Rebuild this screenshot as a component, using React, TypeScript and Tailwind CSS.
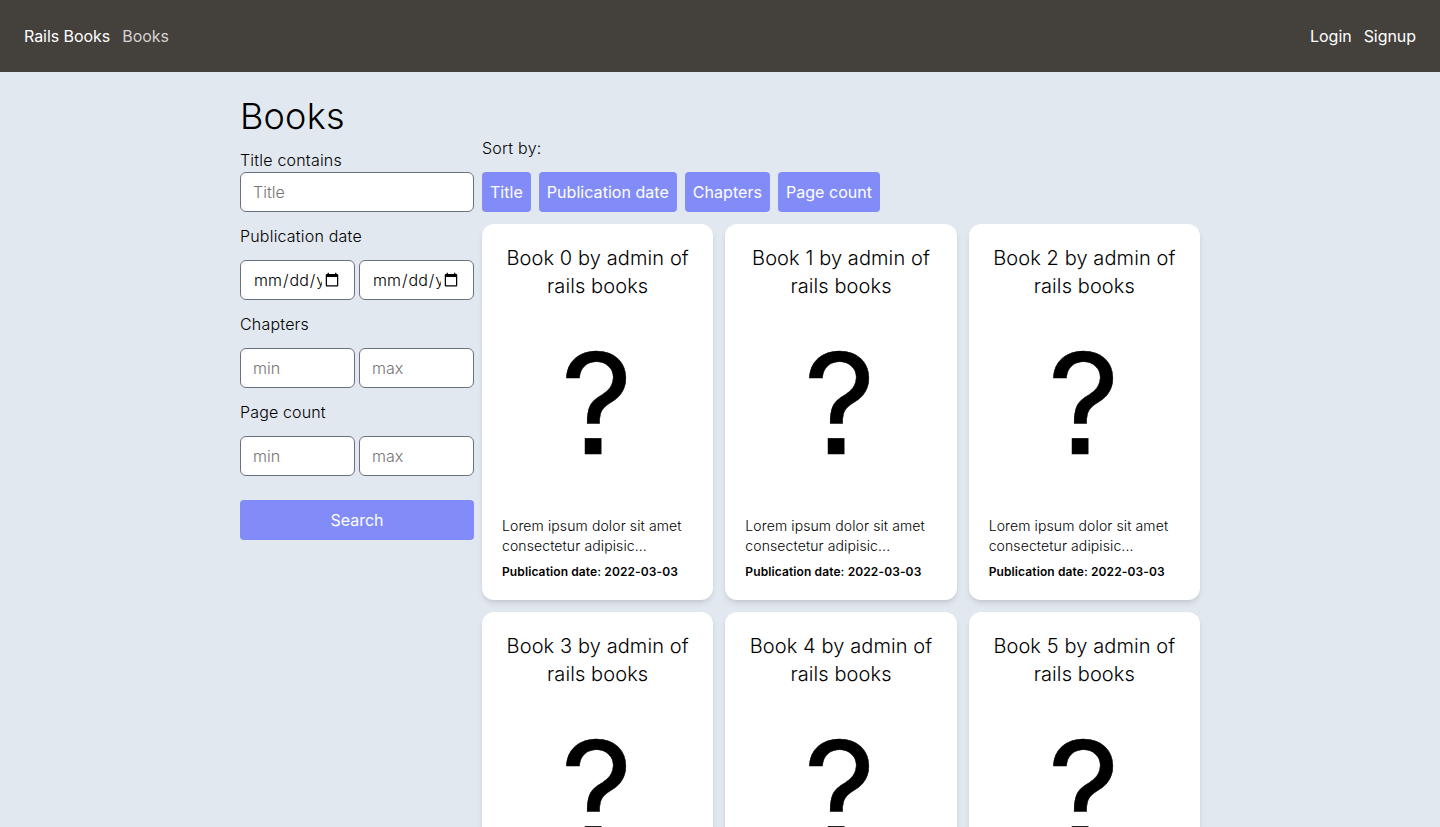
const field =
  "h-10 w-full min-w-0 rounded-md border border-gray-500 bg-white px-3 py-2 font-light placeholder:text-[#757575]";

const sortOptions = ["Title", "Publication date", "Chapters", "Page count"];

function Range() {
  return (
    <div className="grid grid-cols-2 gap-1">
      <input className={field} placeholder="min" />
      <input className={field} placeholder="max" />
    </div>
  );
}

function BookCard({ index }: { index: number }) {
  return (
    <article className="flex h-[376px] flex-col rounded-xl bg-white p-5 shadow-md">
      <h2 className="text-center text-xl tracking-[0.1px]">{`Book ${index} by admin of rails books`}</h2>
      <div className="flex h-[216px] items-center justify-center pr-0.5 pb-2">
        <span className="scale-x-[0.98] scale-y-[0.97] text-[144px] leading-none font-normal text-black [-webkit-text-stroke:0.5px_black] [font-feature-settings:'ss07']">
          ?
        </span>
      </div>
      <p className="text-sm tracking-[0.11px]">Lorem ipsum dolor sit amet consectetur adipisic...</p>
      <p className="mt-2 text-xs font-semibold tracking-[0.11px]">Publication date: 2022-03-03</p>
    </article>
  );
}

export default function App() {
  return (
    <div className="h-screen overflow-hidden bg-[#e2e8f0] font-['Inter',sans-serif] text-base font-light text-black">
      <nav className="flex h-18 items-center justify-between bg-[#44403c] px-6 font-normal tracking-[-0.05px] text-white">
        <div className="flex gap-3">
          <a>Rails Books</a>
          <a className="text-[#d6d3d1]">Books</a>
        </div>
        <div className="flex gap-3">
          <a>Login</a>
          <a>Signup</a>
        </div>
      </nav>
      <main className="mx-auto w-[960px] pt-6">
        <h1 className="text-4xl tracking-[0.2px]">Books</h1>
        <div className="flex items-start gap-2">
          <form className="flex w-[234px] shrink-0 flex-col gap-3 pt-3">
            <label className="block">
              <span className="tracking-[0.2px]">Title contains</span>
              <input className={field + " block"} placeholder="Title" />
            </label>
            <span className="tracking-[0.2px]">Publication date</span>
            <div className="grid grid-cols-2 gap-1">
              <input type="date" className={field} />
              <input type="date" className={field} />
            </div>
            <span className="tracking-[0.2px]">Chapters</span>
            <Range />
            <span className="tracking-[0.15px]">Page count</span>
            <Range />
            <button type="button" className="mt-3 h-10 rounded bg-[#818cf8] font-normal text-white">
              Search
            </button>
          </form>
          <section className="min-w-0 flex-1">
            <p className="tracking-[0.25px]">Sort by:</p>
            <div className="mt-3 flex gap-2">
              {sortOptions.map((label) => (
                <button
                  key={label}
                  className="rounded bg-[#818cf8] p-2 font-normal tracking-[0.04px] text-white"
                >
                  {label}
                </button>
              ))}
            </div>
            <div className="mt-3 grid grid-cols-3 gap-3">
              {[0, 1, 2, 3, 4, 5].map((index) => (
                <BookCard key={index} index={index} />
              ))}
            </div>
          </section>
        </div>
      </main>
    </div>
  );
}
